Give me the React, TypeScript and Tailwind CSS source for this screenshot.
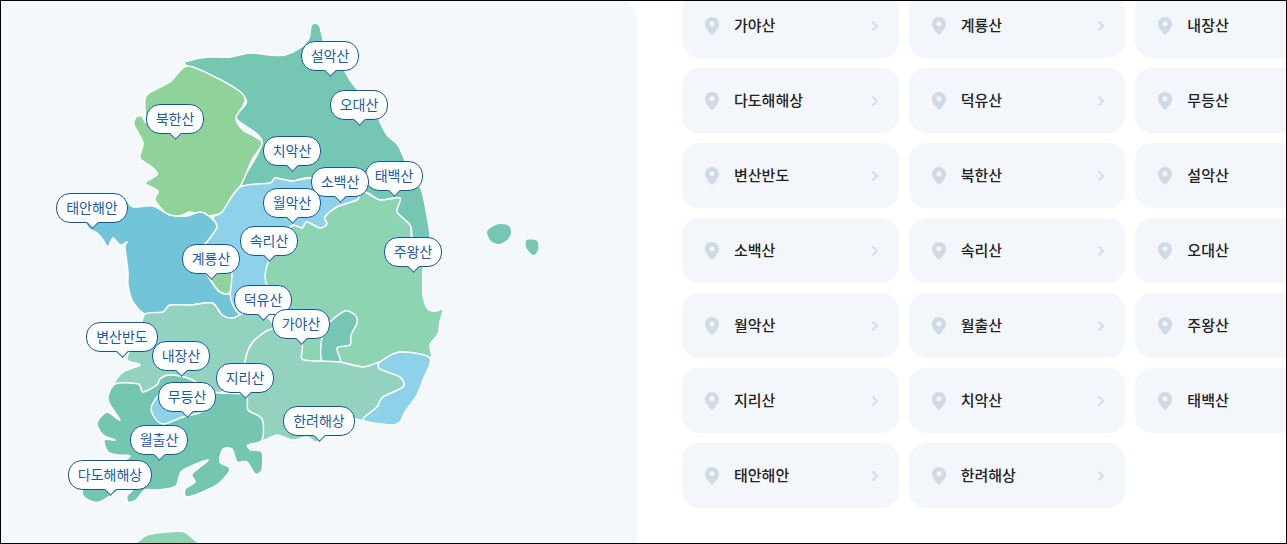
const P = (s: string) => s.trim().split(/\s+/).map((p) => p.split(",").map(Number));

function smooth(str: string) {
  const pts = P(str);
  const n = pts.length;
  let d = `M${pts[0][0]},${pts[0][1]}`;
  const k = 0.14;
  for (let i = 0; i < n; i++) {
    const p0 = pts[(i - 1 + n) % n];
    const p1 = pts[i];
    const p2 = pts[(i + 1) % n];
    const p3 = pts[(i + 2) % n];
    const c1x = p1[0] + (p2[0] - p0[0]) * k;
    const c1y = p1[1] + (p2[1] - p0[1]) * k;
    const c2x = p2[0] - (p3[0] - p1[0]) * k;
    const c2y = p2[1] - (p3[1] - p1[1]) * k;
    d += `C${c1x.toFixed(1)},${c1y.toFixed(1)} ${c2x.toFixed(1)},${c2y.toFixed(1)} ${p2[0]},${p2[1]}`;
  }
  return d + "Z";
}

const regions: [string, string][] = [
  // Gangwon
  ["#75c6b3", "187,66 192,60 210,57 230,57 250,53 270,55 285,55 300,48 309,38 311,26 315,23 320,27 325,45 340,62 347,75 356,88 372,104 380,122 387,135 398,145 405,160 420,187 423,195 426,210 430,235 428,250 423,262 410,262 412,240 410,225 397,212 400,198 380,200 365,192 340,195 312,178 292,181 275,178 270,183 240,187 262,142 236,118 245,98"],
  // Gyeonggi
  ["#8fd39a", "187,66 215,77 238,90 245,98 243,106 236,118 243,130 262,142 252,160 240,187 222,212 205,216 190,212 180,216 168,215 155,200 158,191 145,183 157,175 153,168 140,158 143,143 134,125 136,117 142,116 146,122 146,96 170,82"],
  // Chungnam
  ["#72c4d8", "86,215 110,205 125,200 133,207 153,206 170,215 187,216 200,212 210,217 217,227 207,242 200,252 212,282 220,292 230,294 233,305 240,314 248,312 233,318 222,315 212,303 190,305 170,305 163,312 145,314 133,302 128,285 128,272 125,247 127,242 120,245 113,238 108,247 103,240 97,233 88,228"],
  // Chungbuk
  ["#8ed2ea", "240,187 270,183 275,178 292,181 312,178 340,180 365,192 357,200 337,207 325,217 327,224 320,228 307,222 302,228 290,227 268,263 267,285 270,300 248,312 240,314 233,305 230,294 230,275 212,282 200,252 207,242 217,227 213,217 222,212"],
  // Sejong / small green
  ["#8fd39a", "205,268 230,262 230,292 220,292 212,282"],
  // Gyeongbuk
  ["#8dd4b2", "400,198 397,212 410,225 412,240 423,255 423,272 423,295 428,309 436,311 443,309 440,322 438,334 430,345 430,358 400,352 380,362 363,367 340,362 320,361 302,359 301,342 273,329 290,305 267,285 268,263 290,227 302,228 307,222 320,228 327,224 325,217 337,207 357,200 360,193 365,192 380,200"],
  // Daegu
  ["#75c6b3", "322,337 330,322 345,311 355,315 357,323 351,335 350,345 337,348 340,362 322,361"],
  // Jeonbuk
  ["#93d2bf", "145,314 163,312 170,305 190,305 212,303 222,315 233,318 248,312 268,318 273,329 253,342 245,362 245,399 227,392 213,392 190,379 170,375 160,379 157,385 143,392 138,384 115,384 123,372 140,365 127,360 132,345 140,330"],
  // Gyeongnam
  ["#93d2bf", "245,362 253,342 273,329 301,342 302,359 320,361 340,362 363,367 380,362 380,369 400,377 403,387 383,397 377,407 363,420 353,419 335,430 320,440 315,442 307,437 292,440 277,435 262,440 262,419 248,410 245,395"],
  // Jeonnam
  ["#75c6b0", "115,384 138,384 143,392 157,385 160,379 170,375 190,379 213,392 245,395 248,410 262,419 262,440 248,445 251,450 262,452 262,470 255,474 247,462 237,462 232,449 223,449 220,462 230,469 217,485 188,497 185,489 195,482 192,474 208,460 182,471 176,486 157,490 145,490 136,500 128,502 127,496 132,490 120,490 100,502 88,500 82,492 90,470 120,462 130,456 118,455 108,452 104,440 115,440 103,435 97,423 107,412 120,420 108,400"],
  // Gwangju
  ["#8ed2ea", "152,405 165,390 190,395 205,410 183,417 163,424 153,415"],
  // Busan / Ulsan
  ["#8ed2ea", "380,362 400,352 430,358 423,380 417,395 405,412 400,422 390,425 363,420 377,407 383,397 403,387 400,377 380,369"],
];

const islands: [string, string][] = [
  ["#75c6b3", "487,232 492,227 500,224 509,226 511,233 507,240 499,244 491,241"],
  ["#75c6b3", "527,240 537,241 538,250 533,255 526,247"],
  ["#8dd4b2", "134,548 140,541 150,535 180,532 190,537 196,548"],
];

type Bub = { n: string; x: number; y: number; w: number };
const bubbles: Bub[] = [
  { n: "설악산", x: 301, y: 41, w: 58 },
  { n: "오대산", x: 330, y: 90, w: 58 },
  { n: "북한산", x: 146, y: 104, w: 58 },
  { n: "치악산", x: 263, y: 136, w: 58 },
  { n: "태백산", x: 365, y: 161, w: 58 },
  { n: "소백산", x: 311, y: 167, w: 58 },
  { n: "태안해안", x: 56, y: 193, w: 72 },
  { n: "월악산", x: 263, y: 188, w: 58 },
  { n: "속리산", x: 240, y: 226, w: 58 },
  { n: "계룡산", x: 182, y: 244, w: 58 },
  { n: "주왕산", x: 384, y: 237, w: 58 },
  { n: "덕유산", x: 234, y: 285, w: 58 },
  { n: "가야산", x: 272, y: 309, w: 58 },
  { n: "변산반도", x: 86, y: 322, w: 72 },
  { n: "내장산", x: 152, y: 341, w: 58 },
  { n: "지리산", x: 216, y: 363, w: 58 },
  { n: "무등산", x: 158, y: 382, w: 58 },
  { n: "한려해상", x: 283, y: 406, w: 72 },
  { n: "월출산", x: 130, y: 425, w: 58 },
  { n: "다도해해상", x: 68, y: 460, w: 84 },
];

const cards = [
  "가야산", "계룡산", "내장산", "다도해해상", "덕유산", "무등산", "변산반도", "북한산", "설악산",
  "소백산", "속리산", "오대산", "월악산", "월출산", "주왕산", "지리산", "치악산", "태백산",
  "태안해안", "한려해상",
];

function Bubble({ b }: { b: Bub }) {
  return (
    <div
      className="absolute flex h-[30px] items-center justify-center rounded-[14px] border-[1.5px] border-[#0f57a8] bg-white pb-[3px] text-[14px] leading-none text-[#1a5ba8]"
      style={{ left: b.x - 1, top: b.y - 1, width: b.w }}
    >
      <span className="relative z-10 whitespace-nowrap">{b.n}</span>
      <span className="absolute left-1/2 bottom-[-5px] ml-[-4.5px] h-[9px] w-[9px] rotate-45 border-b-[1.5px] border-r-[1.5px] border-[#0f57a8] bg-white" />
    </div>
  );
}

function Card({ name }: { name: string }) {
  return (
    <div className="flex h-[65px] items-center rounded-[17px] bg-[#f3f7fb] pl-[23px] pr-[20px]">
      <svg width="14" height="18" viewBox="0 0 14 18" className="shrink-0">
        <path
          fillRule="evenodd"
          d="M7 0C3.1 0 0 3.1 0 6.9 0 11.5 5 16.2 7 18c2-1.800 7-6.500 7-11.100C14 3.100 10.900 0 7 0Zm0 9.200a2.500 2.500 0 1 1 0-5 2.500 2.500 0 0 1 0 5Z"
          fill="#d0d9e4"
        />
      </svg>
      <span className="ml-[15px] flex-1 whitespace-nowrap text-[15px] font-medium text-[#222222]">{name}</span>
      <svg width="8" height="12" viewBox="0 0 8 12" className="shrink-0">
        <path d="M1.500 1.500 6 6l-4.500 4.500" fill="none" stroke="#d5dde6" strokeWidth="2" />
      </svg>
    </div>
  );
}

export default function App() {
  return (
    <div
      className="flex h-[544px] w-[1287px] overflow-hidden border border-black bg-white"
      style={{ fontFamily: '"Noto Sans CJK KR", "Noto Sans", sans-serif' }}
    >
      <div className="relative h-full w-[636px] shrink-0 overflow-hidden rounded-tr-[16px] bg-[#f4f8fb]">
        <svg width="636" height="542" viewBox="1 1 636 542" className="absolute left-0 top-0">
          {regions.map(([c, p], i) => (
            <path key={i} d={smooth(p)} fill={c} stroke="#ffffff" strokeWidth="1.5" strokeLinejoin="round" />
          ))}
          {islands.map(([c, p], i) => (
            <path key={i} d={smooth(p)} fill={c} />
          ))}
        </svg>
        {bubbles.map((b) => (
          <Bubble key={b.n} b={b} />
        ))}
      </div>
      <div className="min-w-0 flex-1 overflow-hidden pl-[45px]">
        <div className="mt-[-8px] grid w-[670px] grid-cols-3 gap-[10px]">
          {cards.map((c) => (
            <Card key={c} name={c} />
          ))}
        </div>
      </div>
    </div>
  );
}
